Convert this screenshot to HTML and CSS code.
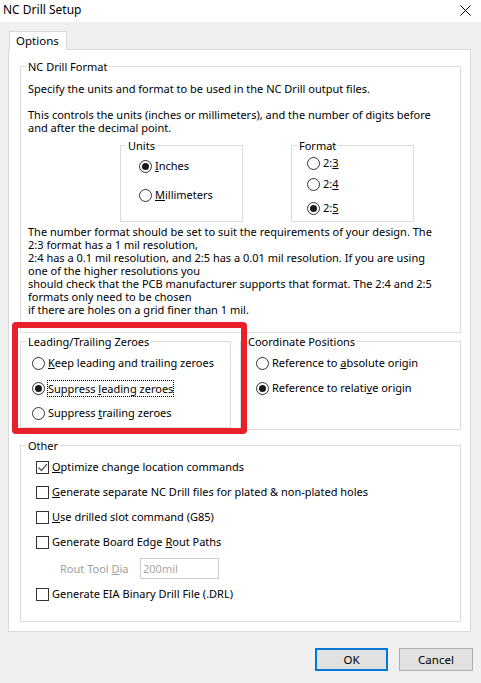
FILE: index.html
```html
<!DOCTYPE html>
<html>
<head>
<meta charset="utf-8">
<title>NC Drill Setup</title>
<link rel="stylesheet" href="styles.css">
</head>
<body>
<div class="window">
  <div class="titlebar">
    <span class="title">NC Drill Setup</span>
    <svg class="close" width="11" height="11" viewBox="0 0 11 11"><path d="M0.5 0.5 L10.5 10.5 M10.5 0.5 L0.5 10.5" stroke="#000" stroke-width="1" fill="none"/></svg>
  </div>
  <div class="client">
    <div class="tabs"><div class="tab">Options</div></div>
    <div class="panel">
      <fieldset class="group fmt">
        <legend>NC Drill Format</legend>
        <p class="p1">Specify the units and format to be used in the NC Drill output files.</p>
        <p class="p2">This controls the units (inches or millimeters), and the number of digits before<br>and after the decimal point.</p>
        <div class="subgroups">
          <fieldset class="group units">
            <legend>Units</legend>
            <div class="opt"><span class="radio on"></span><span><u>I</u>nches</span></div>
            <div class="opt mm"><span class="radio"></span><span><u>M</u>illimeters</span></div>
          </fieldset>
          <fieldset class="group format">
            <legend>Format</legend>
            <div class="opt"><span class="radio"></span><span>2:<u>3</u></span></div>
            <div class="opt f4"><span class="radio"></span><span>2:<u>4</u></span></div>
            <div class="opt f5"><span class="radio on"></span><span>2:<u>5</u></span></div>
          </fieldset>
        </div>
        <p class="note">The number format should be set to suit the requirements of your design. The<br>2:3 format has a 1 mil resolution,<br>2:4 has a 0.1 mil resolution, and 2:5 has a 0.01 mil resolution. If you are using<br>one of the higher resolutions you<br>should check that the PCB manufacturer supports that format. The 2:4 and 2:5<br>formats only need to be chosen<br>if there are holes on a grid finer than 1 mil.</p>
      </fieldset>
      <div class="row2">
        <fieldset class="group lt">
          <legend>Leading/Trailing Zeroes</legend>
          <div class="opt"><span class="radio"></span><span><u>K</u>eep leading and trailing zeroes</span></div>
          <div class="opt next"><span class="radio on"></span><span class="focus">Suppress <u>l</u>eading zeroes</span></div>
          <div class="opt next"><span class="radio"></span><span>Suppress <u>t</u>railing zeroes</span></div>
        </fieldset>
        <fieldset class="group coord">
          <legend>Coordinate Positions</legend>
          <div class="opt"><span class="radio"></span><span>Reference to <u>a</u>bsolute origin</span></div>
          <div class="opt next"><span class="radio on"></span><span>Reference to relati<u>v</u>e origin</span></div>
        </fieldset>
      </div>
      <fieldset class="group other">
        <legend>Other</legend>
        <div class="opt"><span class="check"><svg width="11" height="11" viewBox="0 0 11 11"><path d="M1.5 5.5 L4.5 8.5 L10 2" stroke="#5a5a5a" stroke-width="1.2" fill="none"/></svg></span><span><u>O</u>ptimize change location commands</span></div>
        <div class="opt next"><span class="check"></span><span><u>G</u>enerate separate NC Drill files for plated &amp; non-plated holes</span></div>
        <div class="opt next"><span class="check"></span><span><u>U</u>se drilled slot command (G85)</span></div>
        <div class="opt next"><span class="check"></span><span>Generate Board Edge <u>R</u>out Paths</span></div>
        <div class="rout"><span class="rout-label">Rout Tool <u>D</u>ia</span><span class="input">200mil</span></div>
        <div class="opt eia"><span class="check"></span><span>Generate EIA Binary Drill File (.DRL)</span></div>
      </fieldset>
    </div>
    <div class="buttons">
      <div class="btn default">OK</div>
      <div class="btn">Cancel</div>
    </div>
  </div>
  <div class="highlight"></div>
</div>
</body>
</html>
```
FILE: styles.css
```css
* { box-sizing: border-box; }
html, body { margin: 0; padding: 0; }
body {
  width: 481px;
  height: 683px;
  overflow: hidden;
  background: #f0f0f0;
  font-family: "Noto Sans", "Liberation Sans", sans-serif;
  font-size: 11px;
  color: #000;
}
.window {
  position: relative;
  width: 481px;
  height: 683px;
}
.titlebar {
  height: 22px;
  background: #fff;
  display: flex;
  align-items: center;
  justify-content: space-between;
  padding: 0 10px 2px 3px;
}
.title {
  font-size: 12px;
  line-height: 16px;
}
.client {
  padding-top: 9px;
}
.tabs {
  display: flex;
  padding-left: 9px;
  position: relative;
  z-index: 1;
}
.tab {
  width: 58px;
  height: 19px;
  margin-bottom: -1px;
  background: #fff;
  border: 1px solid #d9d9d9;
  border-bottom: none;
  padding-left: 6px;
  line-height: 18px;
  font-size: 11.5px;
}
.panel {
  margin-left: 8px;
  width: 463px;
  height: 583px;
  background: #fff;
  border: 1px solid #d9d9d9;
  padding: 10px 9px 9px 11px;
}
.group {
  margin: 0;
  border: 1px solid #dcdcdc;
  min-width: 0;
}
.group > legend {
  padding: 0 2px;
  line-height: 13px;
  height: 13px;
}
p { margin: 0; line-height: 13px; white-space: nowrap; }
.fmt {
  width: 441px;
  padding: 9px 7px 16px 7px;
}
.fmt > legend { margin-left: -2px; }
.p2 { margin-top: 13px; }
.subgroups {
  display: flex;
  gap: 48px;
  margin-top: 5px;
  margin-left: 92px;
}
.units, .format { width: 123px; }
.units { padding: 6px 4px 18px 18px; }
.units > legend { margin-left: -13px; }
.format { padding: 3px 4px 5px 15px; }
.format > legend { margin-left: -10px; }
.opt {
  display: flex;
  align-items: center;
  gap: 3px;
  height: 16px;
  line-height: 16px;
  white-space: nowrap;
}
.units .mm { margin-top: 13px; }
.format .f4 { margin-top: 5px; }
.format .f5 { margin-top: 8px; }
.note { margin-top: 3px; }
.radio {
  flex: none;
  width: 13px;
  height: 13px;
  border: 1px solid #333;
  border-radius: 50%;
  background: #fff;
  display: inline-flex;
  align-items: center;
  justify-content: center;
}
.radio.on::after {
  content: "";
  width: 7px;
  height: 7px;
  border-radius: 50%;
  background: #1a1a1a;
}
.check {
  flex: none;
  width: 13px;
  height: 13px;
  border: 1px solid #333;
  background: #fff;
  display: inline-flex;
  align-items: center;
  justify-content: center;
}
.check svg { display: block; }
.focus {
  outline: 1px dotted #000;
  outline-offset: 0;
  line-height: 15px;
}
.row2 {
  display: flex;
  align-items: flex-start;
  gap: 9px;
  margin-top: 2px;
}
.lt { width: 211px; padding: 7px 4px 6px 11px; }
.lt > legend { margin-left: -6px; }
.coord { width: 221px; padding: 7px 4px 33px 15px; }
.coord > legend { margin-left: -10px; }
.next { margin-top: 9px; }
.other {
  width: 441px;
  margin-top: 9px;
  padding: 7px 4px 19px 15px;
}
.other > legend { margin-left: -10px; }
.rout {
  display: flex;
  align-items: center;
  height: 21px;
  margin-top: 8px;
  margin-left: 24px;
  color: #a0a0a0;
}
.rout-label { width: 80px; }
.input {
  width: 79px;
  height: 21px;
  border: 1px solid #cccccc;
  padding-left: 2px;
  line-height: 19px;
  color: #a8a8a8;
  background: #fff;
}
.eia { margin-top: 7px; }
.buttons {
  display: flex;
  justify-content: flex-end;
  gap: 11px;
  margin-top: 16px;
  padding-right: 8px;
}
.btn {
  width: 74px;
  height: 23px;
  border: 1px solid #adadad;
  background: #e1e1e1;
  display: flex;
  align-items: center;
  justify-content: center;
  font-size: 11.5px;
}
.btn.default {
  width: 73px;
  border: 2px solid #0078d7;
}
.highlight {
  position: absolute;
  left: 12px;
  top: 322px;
  width: 235px;
  height: 112px;
  border: 6px solid #e8202a;
  border-radius: 4px;
}
```
